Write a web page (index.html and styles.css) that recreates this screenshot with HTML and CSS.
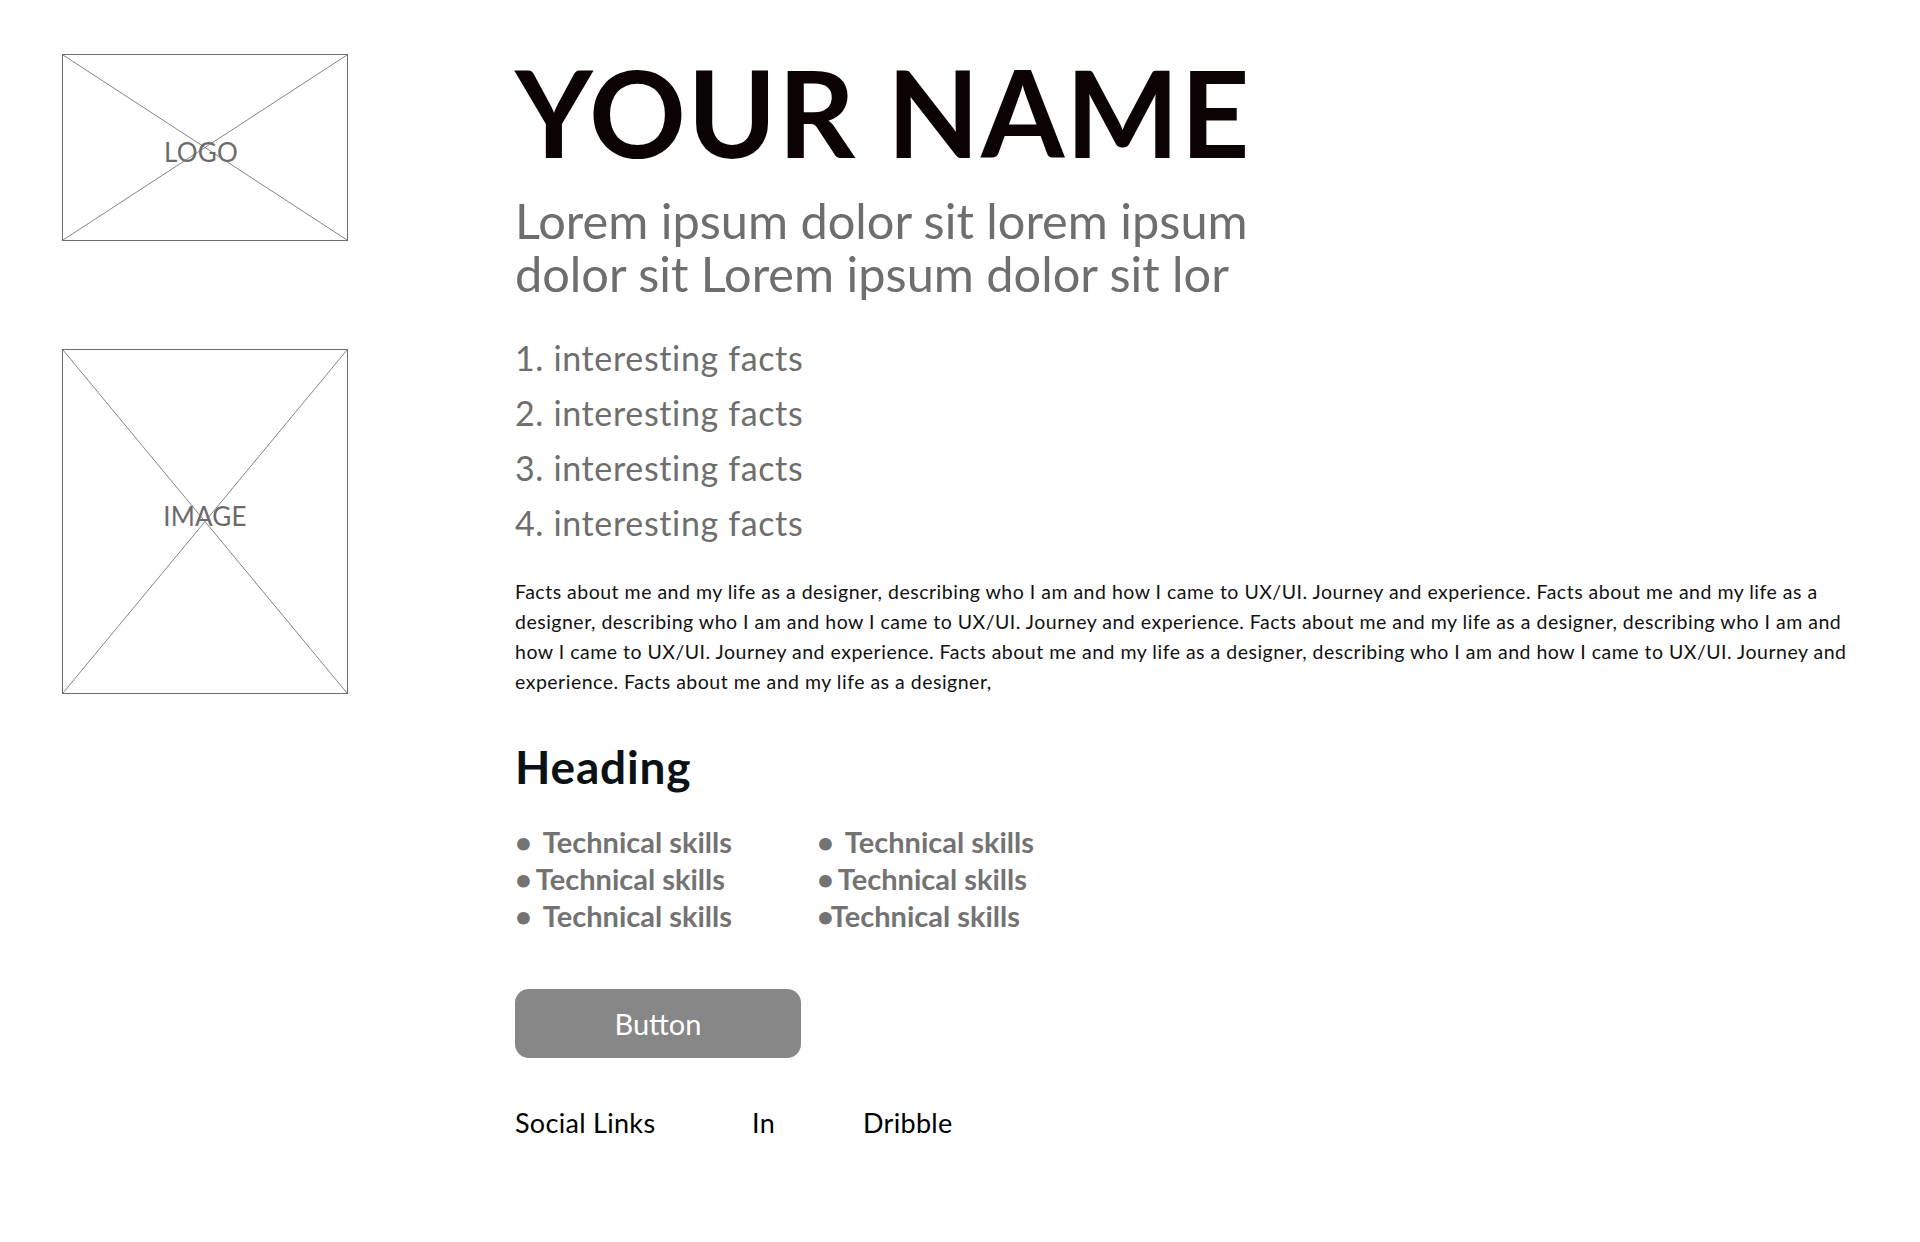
FILE: index.html
```html
<!DOCTYPE html>
<html lang="en">
<head>
<meta charset="utf-8">
<title>Portfolio wireframe</title>
<link rel="stylesheet" href="styles.css">
</head>
<body>
<div class="page">
  <aside class="side">
    <div class="ph ph-logo">
      <svg class="ph-x" viewBox="0 0 100 100" preserveAspectRatio="none" aria-hidden="true">
        <line x1="0" y1="0" x2="100" y2="100"/>
        <line x1="100" y1="0" x2="0" y2="100"/>
      </svg>
      <span class="ph-label ph-label-logo">LOGO</span>
    </div>
    <div class="ph ph-image">
      <svg class="ph-x" viewBox="0 0 100 100" preserveAspectRatio="none" aria-hidden="true">
        <line x1="0" y1="0" x2="100" y2="100"/>
        <line x1="100" y1="0" x2="0" y2="100"/>
      </svg>
      <span class="ph-label ph-label-image">IMAGE</span>
    </div>
  </aside>

  <main class="main">
    <h1 class="name">YOUR NAME</h1>
    <p class="tagline">Lorem ipsum dolor sit lorem ipsum<br>dolor sit Lorem ipsum dolor sit lor</p>

    <ol class="facts">
      <li>1. interesting facts</li>
      <li>2. interesting facts</li>
      <li>3. interesting facts</li>
      <li>4. interesting facts</li>
    </ol>

    <p class="about">Facts about me and my life as a designer, describing who I am and how I came to UX/UI. Journey and experience. Facts about me and my life as a<br>designer, describing who I am and how I came to UX/UI. Journey and experience. Facts about me and my life as a designer, describing who I am and<br>how I came to UX/UI. Journey and experience. Facts about me and my life as a designer, describing who I am and how I came to UX/UI. Journey and<br>experience. Facts about me and my life as a designer,</p>

    <h2 class="heading">Heading</h2>

    <div class="skills">
      <ul class="skill-col">
        <li class="skill"><span class="dot dot-wide">•</span>Technical skills</li>
        <li class="skill"><span class="dot dot-mid">•</span>Technical skills</li>
        <li class="skill"><span class="dot dot-wide">•</span>Technical skills</li>
      </ul>
      <ul class="skill-col">
        <li class="skill"><span class="dot dot-wide">•</span>Technical skills</li>
        <li class="skill"><span class="dot dot-mid">•</span>Technical skills</li>
        <li class="skill"><span class="dot dot-tight">•</span>Technical skills</li>
      </ul>
    </div>

    <button class="btn" type="button">Button</button>

    <nav class="social">
      <span class="social-item social-label">Social Links</span>
      <a class="social-item social-in" href="#">In</a>
      <a class="social-item" href="#">Dribble</a>
    </nav>
  </main>
</div>
</body>
</html>
```

FILE: styles.css
```css
* {
  box-sizing: border-box;
}

html, body {
  margin: 0;
  padding: 0;
  background: #ffffff;
}

body {
  font-family: "Lato", "Open Sans", "Liberation Sans", sans-serif;
  color: #000000;
}

.page {
  display: flex;
  align-items: flex-start;
  gap: 167px;
  padding-left: 62px;
  min-height: 1242px;
}

/* ---------- left column placeholders ---------- */
.side {
  display: flex;
  flex-direction: column;
  width: 286px;
  flex: none;
}

.ph {
  position: relative;
  display: flex;
  align-items: center;
  justify-content: center;
  width: 286px;
  border: 1px solid #6d6d6d;
  background: #fff;
}

.ph-logo {
  height: 187px;
  margin-top: 54px;
}

.ph-image {
  height: 345px;
  margin-top: 108px;
}

.ph-x {
  position: absolute;
  inset: 0;
  width: 100%;
  height: 100%;
}

.ph-x line {
  stroke: #858585;
  stroke-width: 1;
  vector-effect: non-scaling-stroke;
}

.ph-label {
  position: relative;
  font-size: 26px;
  line-height: 30px;
  color: #6b6b6b;
  letter-spacing: 0.2px;
}

.ph-label-logo {
  padding-top: 8px;
  padding-right: 8px;
}

.ph-label-image {
  padding-bottom: 12px;
}

/* ---------- main column ---------- */
.main {
  width: 1380px;
  padding-top: 52px;
}

.name {
  margin: 0;
  font-size: 120px;
  line-height: 120px;
  font-weight: 700;
  letter-spacing: 1.4px;
  color: #0a0203;
  white-space: nowrap;
}

.tagline {
  margin: 22px 0 0;
  font-size: 48.7px;
  line-height: 53px;
  color: #6e6e6e;
  white-space: nowrap;
}

.facts {
  list-style: none;
  margin: 30px 0 0;
  padding: 0;
  font-size: 34px;
  line-height: 55px;
  letter-spacing: 0.65px;
  color: #6e6e6e;
}

.about {
  margin: 27px 0 0;
  font-size: 19.5px;
  line-height: 30px;
  letter-spacing: 0.5px;
  color: #111111;
  white-space: nowrap;
}

.heading {
  margin: 44px 0 0;
  font-size: 46px;
  line-height: 52px;
  font-weight: 700;
  letter-spacing: 0.8px;
  color: #0b1114;
}

.skills {
  display: grid;
  grid-template-columns: 302px auto;
  margin-top: 30px;
}

.skill-col {
  list-style: none;
  margin: 0;
  padding: 0;
}

.skill {
  font-size: 29px;
  line-height: 37px;
  font-weight: 700;
  color: #737373;
  white-space: nowrap;
}

.dot {
  display: inline-block;
}

.dot-wide {
  margin-right: 11px;
}

.dot-mid {
  margin-right: 4px;
}

.dot-tight {
  margin-right: -3px;
}

.btn {
  display: flex;
  align-items: center;
  justify-content: center;
  width: 286px;
  height: 69px;
  margin-top: 55px;
  padding: 0;
  border: none;
  border-radius: 14px;
  background: #878787;
  color: #ffffff;
  font-family: inherit;
  font-size: 29px;
  cursor: pointer;
}

.social {
  display: flex;
  margin-top: 49px;
  font-size: 27px;
  line-height: 32px;
  letter-spacing: 0.3px;
}

.social-item {
  color: #000000;
  text-decoration: none;
}

.social-label {
  width: 237px;
}

.social-in {
  width: 111px;
}
```
